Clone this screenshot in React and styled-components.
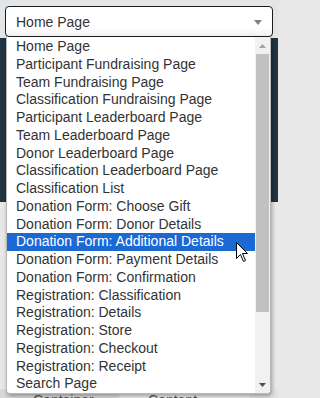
import React from "react";
import styled, { createGlobalStyle } from "styled-components";

const GlobalStyle = createGlobalStyle`
  html, body {
    margin: 0;
    padding: 0;
    background: #e8e8e8;
  }
  body {
    font-family: "Liberation Sans", Arial, sans-serif;
  }
`;

const Page = styled.div`
  position: relative;
  display: flex;
  flex-direction: column;
  width: 278px;
  height: 398px;
  overflow: hidden;
  background: #e8e8e8;
`;

const TopBand = styled.div`
  height: 38px;
  padding: 6px 5px 0 5px;
  box-sizing: border-box;
  background: #e3e6e8;
`;

const SelectBox = styled.div`
  display: flex;
  align-items: center;
  justify-content: space-between;
  height: 31px;
  padding: 0 10px 0 10px;
  box-sizing: border-box;
  border: 1px solid #1c1c1c;
  border-radius: 4px;
  background: linear-gradient(#ffffff 70%, #f1f1f1);
  font-size: 14px;
  color: #333;
`;

const Caret = styled.span`
  width: 0;
  height: 0;
  margin-top: 2px;
  border-left: 4px solid transparent;
  border-right: 4px solid transparent;
  border-top: 5px solid #7b8085;
`;

const Hero = styled.div`
  height: 164px;
  background: #213441;
`;

const Body = styled.div`
  flex: 1;
  background: #e8e8e8;
`;

const Tabs = styled.div`
  display: flex;
  height: 9px;
  gap: 2px;
  background: #e2e2e2;
`;

const Tab = styled.div`
  width: ${(p) => p.$w}px;
  padding: 3px 0 0 ${(p) => p.$pad}px;
  box-sizing: border-box;
  background: ${(p) => (p.$dark ? "#d9d9d9" : "#ececec")};
  font-size: 14px;
  line-height: 16px;
  color: #555;
  white-space: nowrap;
`;

const Dropdown = styled.div`
  position: absolute;
  top: 37px;
  left: 6px;
  display: flex;
  width: 265px;
  height: 357px;
  box-sizing: border-box;
  border: 1px solid #b9b9b9;
  border-top: none;
  border-radius: 0 0 4px 4px;
  background: #fff;
  box-shadow: 1px 2px 4px rgba(0, 0, 0, 0.35);
  overflow: hidden;
`;

const Options = styled.ul`
  flex: 1;
  margin: 0;
  padding: 1px 0 0 0;
  list-style: none;
`;

const Option = styled.li`
  height: 17.75px;
  padding-left: 9px;
  font-size: 14px;
  line-height: 17px;
  color: ${(p) => (p.$active ? "#fff" : "#333")};
  background: ${(p) => (p.$active ? "#1a69d5" : "transparent")};
  white-space: nowrap;
`;

const Scrollbar = styled.div`
  display: flex;
  flex-direction: column;
  width: 15px;
  background: #f1f1f1;
`;

const ScrollButton = styled.div`
  display: flex;
  align-items: center;
  justify-content: center;
  height: 17px;
`;

const Track = styled.div`
  flex: 1;
`;

const Thumb = styled.div`
  height: 258px;
  margin: 0 1px;
  background: #c1c1c1;
`;

const Cursor = styled.svg`
  position: absolute;
  left: 236px;
  top: 242px;
`;

const pages = [
  "Home Page",
  "Participant Fundraising Page",
  "Team Fundraising Page",
  "Classification Fundraising Page",
  "Participant Leaderboard Page",
  "Team Leaderboard Page",
  "Donor Leaderboard Page",
  "Classification Leaderboard Page",
  "Classification List",
  "Donation Form: Choose Gift",
  "Donation Form: Donor Details",
  "Donation Form: Additional Details",
  "Donation Form: Payment Details",
  "Donation Form: Confirmation",
  "Registration: Classification",
  "Registration: Details",
  "Registration: Store",
  "Registration: Checkout",
  "Registration: Receipt",
  "Search Page",
];

const hovered = 11;

const App = () => {
  return (
    <Page>
      <GlobalStyle />
      <TopBand>
        <SelectBox>
          <span>Home Page</span>
          <Caret />
        </SelectBox>
      </TopBand>
      <Hero />
      <Body />
      <Tabs>
        <Tab $dark $w={118} $pad={33}>
          Container
        </Tab>
        <Tab $w={130} $pad={28}>
          Content
        </Tab>
      </Tabs>

      <Dropdown>
        <Options>
          {pages.map((name, i) => (
            <Option key={name} $active={i === hovered}>
              {name}
            </Option>
          ))}
        </Options>
        <Scrollbar>
          <ScrollButton>
            <svg width="7" height="4" viewBox="0 0 7 4">
              <polygon points="0,4 7,4 3.5,0" fill="#a3a3a3" />
            </svg>
          </ScrollButton>
          <Track>
            <Thumb />
          </Track>
          <ScrollButton>
            <svg width="7" height="4" viewBox="0 0 7 4">
              <polygon points="0,0 7,0 3.5,4" fill="#505050" />
            </svg>
          </ScrollButton>
        </Scrollbar>
      </Dropdown>

      <Cursor width="13" height="21" viewBox="0 0 13 21">
        <polygon
          points="0.5,0.5 0.5,16.5 4.5,12.5 7.5,19.5 9.5,18.5 6.5,11.5 11.5,11.5"
          fill="#fff"
          stroke="#000"
          strokeWidth="1"
          strokeLinejoin="miter"
        />
      </Cursor>
    </Page>
  );
};

export default App;
